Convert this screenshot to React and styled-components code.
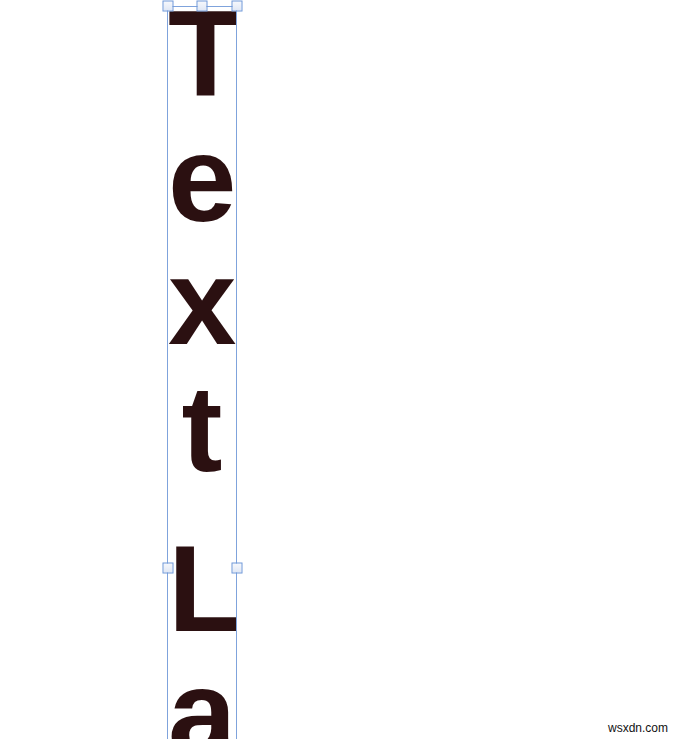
import React from 'react';
import styled, {createGlobalStyle} from 'styled-components';

const GlobalStyle = createGlobalStyle`
	html, body {
		margin: 0;
		padding: 0;
		background: #ffffff;
	}
	body {
		font-family: "Liberation Sans", Arial, sans-serif;
	}
`;

const Canvas = styled.div`
	position: relative;
	width: 680px;
	height: 739px;
	overflow: hidden;
	background: #ffffff;
	padding: 6px 0 0 167px;
	box-sizing: border-box;
`;

const Frame = styled.div`
	position: relative;
	width: 70px;
	height: 1124px;
	box-sizing: border-box;
	border: 1px solid #7fa3dc;
`;

const Column = styled.div`
	display: flex;
	flex-direction: column;
	align-items: center;
	overflow: hidden;
	height: 100%;
`;

const Glyph = styled.span`
	display: block;
	width: 100%;
	text-align: center;
	font-family: "Liberation Sans", Arial, sans-serif;
	font-weight: 700;
	font-size: 123px;
	line-height: 123px;
	height: 123px;
	color: #2b1011;
	margin-top: ${props => props.$gap}px;
	flex: none;
`;

const Handle = styled.div`
	position: absolute;
	width: 9px;
	height: 9px;
	border: 1px solid #6f97d8;
	background: linear-gradient(#f6f8fc, #dfe7f5);
	left: ${props => props.$x};
	top: ${props => props.$y}px;
	transform: translate(-50%, -50%);
	z-index: 2;
`;

const Watermark = styled.div`
	position: absolute;
	right: 12px;
	bottom: 4px;
	font-family: "Liberation Sans", Arial, sans-serif;
	font-size: 12px;
	color: #111111;
	text-shadow: 0 0 3px #ffffff, 0 0 3px #ffffff;
`;

// vertical text layer, one character per row
const letters = [
	{ch: 'T', gap: -15},
	{ch: 'e', gap: 2},
	{ch: 'x', gap: 0},
	{ch: 't', gap: 4},
	{ch: 'L', gap: 37},
	{ch: 'a', gap: 1},
];

const handles = [
	{x: '-0.5px', y: -1},
	{x: '50%', y: -1},
	{x: 'calc(100% + 0.5px)', y: -1},
	{x: '-0.5px', y: 561},
	{x: 'calc(100% + 0.5px)', y: 561},
];

const App = () => {
	return (
		<>
			<GlobalStyle />
			<Canvas>
				<Frame>
					<Column>
						{letters.map((l, i) => (
							<Glyph key={i} $gap={l.gap}>{l.ch}</Glyph>
						))}
					</Column>
					{handles.map((h, i) => (
						<Handle key={i} $x={h.x} $y={h.y} />
					))}
				</Frame>
				<Watermark>wsxdn.com</Watermark>
			</Canvas>
		</>
	);
};

export default App;
